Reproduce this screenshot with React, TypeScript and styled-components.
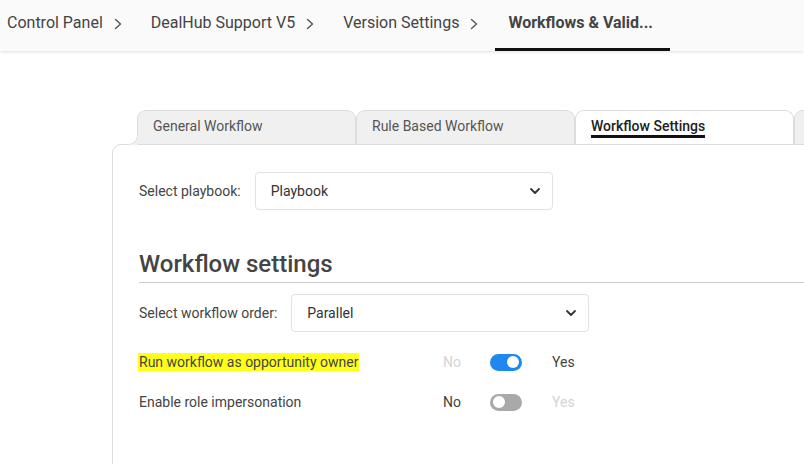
import React from 'react';
import styled, { createGlobalStyle } from 'styled-components';

const GlobalStyle = createGlobalStyle`
  html, body {
    margin: 0;
    padding: 0;
    background: #ffffff;
    overflow: hidden;
  }
  body {
    font-family: Roboto, "Liberation Sans", Arial, sans-serif;
    color: #444444;
  }
`;

const crumbs = ['Control Panel', 'DealHub Support V5', 'Version Settings'];
const tabs = ['General Workflow', 'Rule Based Workflow', 'Workflow Settings'];

function Chevron() {
  return (
    <svg width="8" height="12" viewBox="0 0 8 12" fill="none">
      <polyline points="1.5,1.5 6.5,6 1.5,10.5" stroke="#555" strokeWidth="1.4" strokeLinecap="round" strokeLinejoin="round" />
    </svg>
  );
}

function CaretDown() {
  return (
    <svg width="14" height="14" viewBox="0 0 14 14" fill="none">
      <polyline points="3,5 7,9 11,5" stroke="#333" strokeWidth="1.8" strokeLinecap="round" strokeLinejoin="round" />
    </svg>
  );
}

function App() {
  return (
    <Page>
      <GlobalStyle />
      <Header>
        {crumbs.map((c) => (
          <Crumb key={c}>
            {c}
            <ChevronWrap>
              <Chevron />
            </ChevronWrap>
          </Crumb>
        ))}
        <ActiveCrumb>Workflows &amp; Valid...</ActiveCrumb>
      </Header>

      <TabBar>
        {tabs.map((t, i) => (
          <Tab key={t} $active={i === 2} $first={i === 0}>
            <TabLabel $active={i === 2}>{t}</TabLabel>
          </Tab>
        ))}
        <Tab $active={false} $first={false} />
      </TabBar>

      <Panel>
        <FieldRow>
          <FieldLabel>Select playbook:</FieldLabel>
          <Select>
            <span>Playbook</span>
            <CaretDown />
          </Select>
        </FieldRow>

        <SectionTitle>Workflow settings</SectionTitle>

        <FieldRow>
          <FieldLabel>Select workflow order:</FieldLabel>
          <Select>
            <span>Parallel</span>
            <CaretDown />
          </Select>
        </FieldRow>

        <ToggleList>
          <ToggleRow>
            <RowLabel><Highlight>Run workflow as opportunity owner</Highlight></RowLabel>
            <Choice $dim>No</Choice>
            <Switch $on />
            <Choice $dim={false}>Yes</Choice>
          </ToggleRow>
          <ToggleRow>
            <RowLabel>Enable role impersonation</RowLabel>
            <Choice $dim={false}>No</Choice>
            <Switch $on={false} />
            <Choice $dim>Yes</Choice>
          </ToggleRow>
        </ToggleList>
      </Panel>
    </Page>
  );
}

export default App;

const Page = styled.div`
  width: 804px;
  height: 464px;
  overflow: hidden;
`;

const Header = styled.header`
  height: 51px;
  background: #fafafa;
  box-shadow: 0 1px 3px rgba(0, 0, 0, 0.12);
  display: flex;
  align-items: stretch;
  padding-left: 7px;
  box-sizing: border-box;
  font-size: 16px;
  color: #444;
`;

const Crumb = styled.div`
  display: flex;
  align-items: center;
  padding-bottom: 6px;
  margin-right: 29px;
  white-space: nowrap;
  &:nth-child(3) {
    margin-right: 17px;
  }
`;

const ChevronWrap = styled.span`
  display: inline-flex;
  margin-left: 11px;
  margin-top: 2px;
`;

const ActiveCrumb = styled.div`
  display: flex;
  align-items: center;
  padding: 0 17px 3px 13px;
  font-weight: 700;
  color: #444;
  border-bottom: 3px solid #111;
  white-space: nowrap;
`;

const TabBar = styled.div`
  display: flex;
  margin: 59px 0 0 137px;
  height: 34px;
`;

const Tab = styled.div<{ $active: boolean; $first: boolean }>`
  position: relative;
  flex: 0 0 auto;
  width: 219px;
  height: 34px;
  box-sizing: border-box;
  padding: 0 0 4px 15px;
  display: flex;
  align-items: center;
  background: ${(p) => (p.$active ? '#ffffff' : '#f0f0f0')};
  border: 1px solid #dcdcdc;
  border-bottom: none;
  border-radius: 9px 9px 0 0;
  font-size: 14px;
  color: #555;
  &::before {
    content: '';
    display: ${(p) => (p.$first ? 'block' : 'none')};
    position: absolute;
    left: -9px;
    bottom: -1px;
    width: 9px;
    height: 9px;
    background: radial-gradient(circle at 0 0, #ffffff 7.5px, #dcdcdc 8px, #f0f0f0 9px);
  }
`;

const TabLabel = styled.span<{ $active: boolean }>`
  position: relative;
  color: ${(p) => (p.$active ? '#222' : '#555')};
  font-weight: ${(p) => (p.$active ? 500 : 400)};
  padding-bottom: ${(p) => (p.$active ? '1px' : '0')};
  border-bottom: ${(p) => (p.$active ? '3px solid #111' : 'none')};
  margin-top: ${(p) => (p.$active ? '4px' : '0')};
`;

const Panel = styled.section`
  margin-left: 112px;
  width: 720px;
  height: 340px;
  box-sizing: border-box;
  border: 1px solid #dcdcdc;
  border-radius: 9px 0 0 0;
  padding: 27px 0 0 26px;
`;

const FieldRow = styled.div`
  display: flex;
  align-items: center;
  gap: 14px;
  font-size: 14px;
`;

const FieldLabel = styled.span`
  color: #444;
`;

const Select = styled.div`
  width: 298px;
  height: 38px;
  box-sizing: border-box;
  border: 1px solid #e2e2e2;
  border-radius: 4px;
  display: flex;
  align-items: center;
  justify-content: space-between;
  padding: 0 10px 0 15px;
  font-size: 14px;
  color: #333;
`;

const SectionTitle = styled.h2`
  margin: 40px 0 11px;
  padding-bottom: 4px;
  font-size: 24px;
  font-weight: 500;
  color: #444;
  border-bottom: 1px solid #cfcfcf;
  line-height: 28px;
`;

const ToggleList = styled.div`
  display: flex;
  flex-direction: column;
  gap: 22px;
  margin-top: 21px;
`;

const ToggleRow = styled.div`
  display: grid;
  grid-template-columns: 304px 47px 62px auto;
  align-items: center;
  font-size: 14px;
  height: 18px;
`;

const RowLabel = styled.span`
  color: #444;
`;

const Highlight = styled.span`
  background: #ffff1a;
  padding: 1px 1px;
  margin-left: -1px;
`;

const Choice = styled.span<{ $dim: boolean }>`
  color: ${(p) => (p.$dim ? '#d4d4d4' : '#444')};
`;

const Switch = styled.span<{ $on: boolean }>`
  position: relative;
  display: block;
  width: 32px;
  height: 17px;
  border-radius: 9px;
  background: ${(p) => (p.$on ? '#1e88f0' : '#a9a9a9')};
  &::after {
    content: '';
    position: absolute;
    top: 2.5px;
    left: ${(p) => (p.$on ? '17px' : '3px')};
    width: 12px;
    height: 12px;
    border-radius: 50%;
    background: #ffffff;
  }
`;
